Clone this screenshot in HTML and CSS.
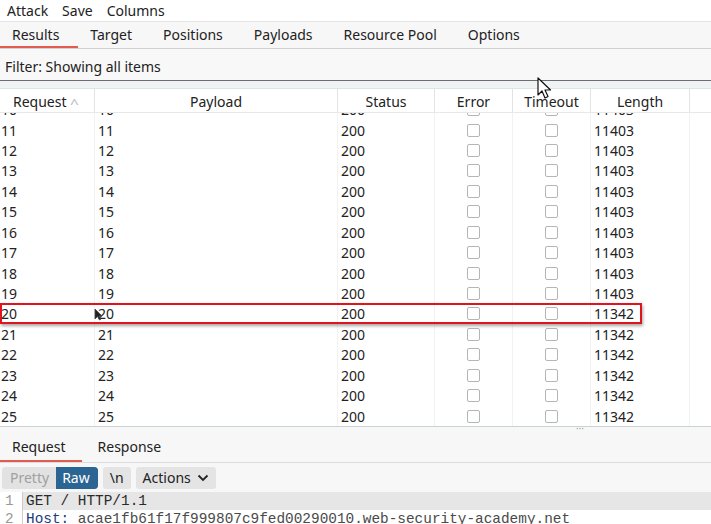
FILE: index.html
```html
<!DOCTYPE html>
<html>
<head>
<meta charset="utf-8">
<link rel="stylesheet" href="styles.css">
</head>
<body>
<div class="app">
  <div class="menubar">
    <span class="menu">Attack</span><span class="menu">Save</span><span class="menu">Columns</span>
  </div>
  <div class="tabbar">
    <span class="tab active">Results</span>
    <span class="tab">Target</span>
    <span class="tab">Positions</span>
    <span class="tab">Payloads</span>
    <span class="tab">Resource Pool</span>
    <span class="tab">Options</span>
  </div>
  <div class="filter">Filter: Showing all items</div>
  <div class="gap"></div>
  <div class="table">
    <div class="thead">
      <div class="th c1">Request <span class="sort">^</span></div>
      <div class="th c2">Payload</div>
      <div class="th c3">Status</div>
      <div class="th c4">Error</div>
      <div class="th c5">Timeout</div>
      <div class="th c6">Length</div>
      <div class="th c7"></div>
    </div>
    <div class="tbody">
      <div class="rows" id="rows"></div>
      <div class="highlight"></div>
    </div>
  </div>
  <div class="splitter"><span class="dots">···</span></div>
  <div class="subtabs">
    <span class="subtab active">Request</span>
    <span class="subtab">Response</span>
  </div>
  <div class="toolbar">
    <div class="seg"><span class="seg-btn off">Pretty</span><span class="seg-btn on">Raw</span></div>
    <span class="btn">\n</span>
    <span class="btn">Actions <svg class="chev" width="12" height="8" viewBox="0 0 12 8"><path d="M1.5 1.5 L6 6 L10.5 1.5" fill="none" stroke="#222" stroke-width="1.8"/></svg></span>
  </div>
  <div class="code">
    <div class="line hl"><span class="ln">1</span><span class="lc">GET / HTTP/1.1</span></div>
    <div class="line"><span class="ln">2</span><span class="lc"><span class="hk">Host:</span> acae1fb61f17f999807c9fed00290010.web-security-academy.net</span></div>
  </div>
  <svg class="cursor big" width="16" height="24" viewBox="0 0 16 24"><path d="M1 1 L1 18 L5 14 L8 21 L11 19.5 L8 13 L13.5 13 Z" fill="#fff" stroke="#111" stroke-width="1.2" stroke-linejoin="round"/></svg>
  <svg class="cursor small" width="9" height="13" viewBox="0 0 9 13"><path d="M1 1 L1 11 L3.5 8.5 L5.5 12 L7 11 L5 8 L8 8 Z" fill="#222" stroke="#444" stroke-width="0.8"/></svg>
</div>
<script>
var rows = document.getElementById('rows');
var html = '';
for (var i = 10; i <= 25; i++) {
  var len = i >= 20 ? '11342' : '11403';
  html += '<div class="tr"><div class="td c1">' + i + '</div><div class="td c2">' + i + '</div><div class="td c3">200</div><div class="td c4"><span class="cb"></span></div><div class="td c5"><span class="cb"></span></div><div class="td c6">' + len + '</div><div class="td c7"></div></div>';
}
rows.innerHTML = html;
</script>
</body>
</html>
```

FILE: styles.css
```css
* { box-sizing: border-box; }
html, body { margin: 0; padding: 0; background: #fff; }
body { font-family: "Noto Sans", "Open Sans", sans-serif; font-size: 14px; color: #222; width: 711px; height: 524px; overflow: hidden; }
.app { position: relative; width: 711px; height: 524px; overflow: hidden; }

.menubar { height: 21px; display: flex; align-items: center; padding-left: 7px; background: #fff; }
.menu { margin-right: 14px; line-height: 20px; }

.tabbar { height: 28px; display: flex; align-items: stretch; background: #f7f7f7; border-top: 1px solid #e4e4e4; border-bottom: 1px solid #cfcfcf; }
.tab { padding: 0 19px 0 12px; display: flex; align-items: center; line-height: 26px; }
.tab.active { border-bottom: 2px solid #e15b4f; padding-top: 2px; }

.filter { height: 32px; display: flex; align-items: center; padding: 3px 0 0 5px; background: #f8f8f8; border-bottom: 1px solid #6e6e6e; }
.gap { height: 8px; background: #eff3f3; border-bottom: 1px solid #dde5e6; }

.table { height: 338px; display: flex; flex-direction: column; }
.thead { height: 24px; display: flex; background: #fff; border-bottom: 1px solid #e8e8e8; }
.th { display: flex; align-items: center; justify-content: center; border-right: 1px solid #e3e3e3; color: #222; padding-top: 1px; }
.th.c1 { justify-content: flex-start; padding-left: 13px; }
.sort { color: #bbb; font-size: 12px; margin-left: 4px; transform: scaleX(1.3); display: inline-block; padding-top: 5px; }
.th.c7 { border-right: none; }
.c1 { width: 95px; }
.c2 { width: 243px; }
.c3 { width: 97px; }
.c4 { width: 78px; }
.c5 { width: 78px; }
.c6 { width: 99px; }
.c7 { flex: 1; }

.tbody { position: relative; flex: 1; overflow: hidden; border-bottom: 1px solid #c9d3d4; }
.rows { margin-top: -13.5px; }
.tr { height: 20.43px; display: flex; }
.td { display: flex; align-items: center; border-right: 1px solid #f2f2f2; white-space: nowrap; }
.td.c1 { padding-left: 1px; }
.td.c2 { padding-left: 3px; }
.td.c3 { padding-left: 3px; }
.td.c4, .td.c5 { justify-content: center; }
.td.c6 { padding-left: 3px; }
.td.c7 { border-right: none; }
.cb { width: 13px; height: 13px; border: 1px solid #b5b5b5; border-radius: 2px; background: #fff; display: inline-block; }

.highlight { position: absolute; left: 0; top: 190px; width: 642px; height: 21px; border: 2px solid #e0141c; box-shadow: 1px 2px 3px rgba(0,0,0,0.35); }

.splitter { height: 7px; background: #f7f7f7; position: relative; }
.dots { position: absolute; left: 576px; top: -6px; font-size: 10px; color: #9aa; letter-spacing: 0; }

.subtabs { height: 29px; display: flex; background: #f7f7f7; border-bottom: 1px solid #dcdcdc; }
.subtab { padding: 0 16px 4px 16px; display: flex; align-items: center; }
.subtab.active { border-bottom: 2px solid #e15b4f; padding: 0 16px 2px 12px; }

.toolbar { height: 29px; display: flex; align-items: center; padding: 0 0 0 2px; gap: 5px; background: #f7f7f7; }
.seg { display: flex; height: 22px; border-radius: 3px; overflow: hidden; }
.seg-btn { display: flex; align-items: center; }
.seg-btn.off { background: #e2e2e2; color: #a0a0a0; padding: 0 7px 0 8px; }
.seg-btn.on { background: #2a6593; color: #fff; padding: 0 8px 0 6px; border-radius: 0 3px 3px 0; }
.btn { display: flex; align-items: center; height: 22px; padding: 0 7px; background: #e4e4e4; border-radius: 3px; color: #222; }
.chev { margin-left: 6px; }

.code { font-family: "Liberation Mono", "DejaVu Sans Mono", monospace; font-size: 14.4px; color: #333; }
.line { height: 18px; display: flex; align-items: center; }
.ln { width: 22px; padding-left: 5px; color: #999; background: #fff; }
.lc { flex: 1; padding-left: 3px; height: 18px; line-height: 18px; border-left: 1px solid #ccc; color: #4a4a4a; }
.line.hl .lc { background: #e6e6e6; color: #2a2a2a; }
.hk { color: #1f3a7e; }

.cursor { position: absolute; }
.cursor.big { left: 537px; top: 77px; }
.cursor.small { left: 94px; top: 308px; }
```
